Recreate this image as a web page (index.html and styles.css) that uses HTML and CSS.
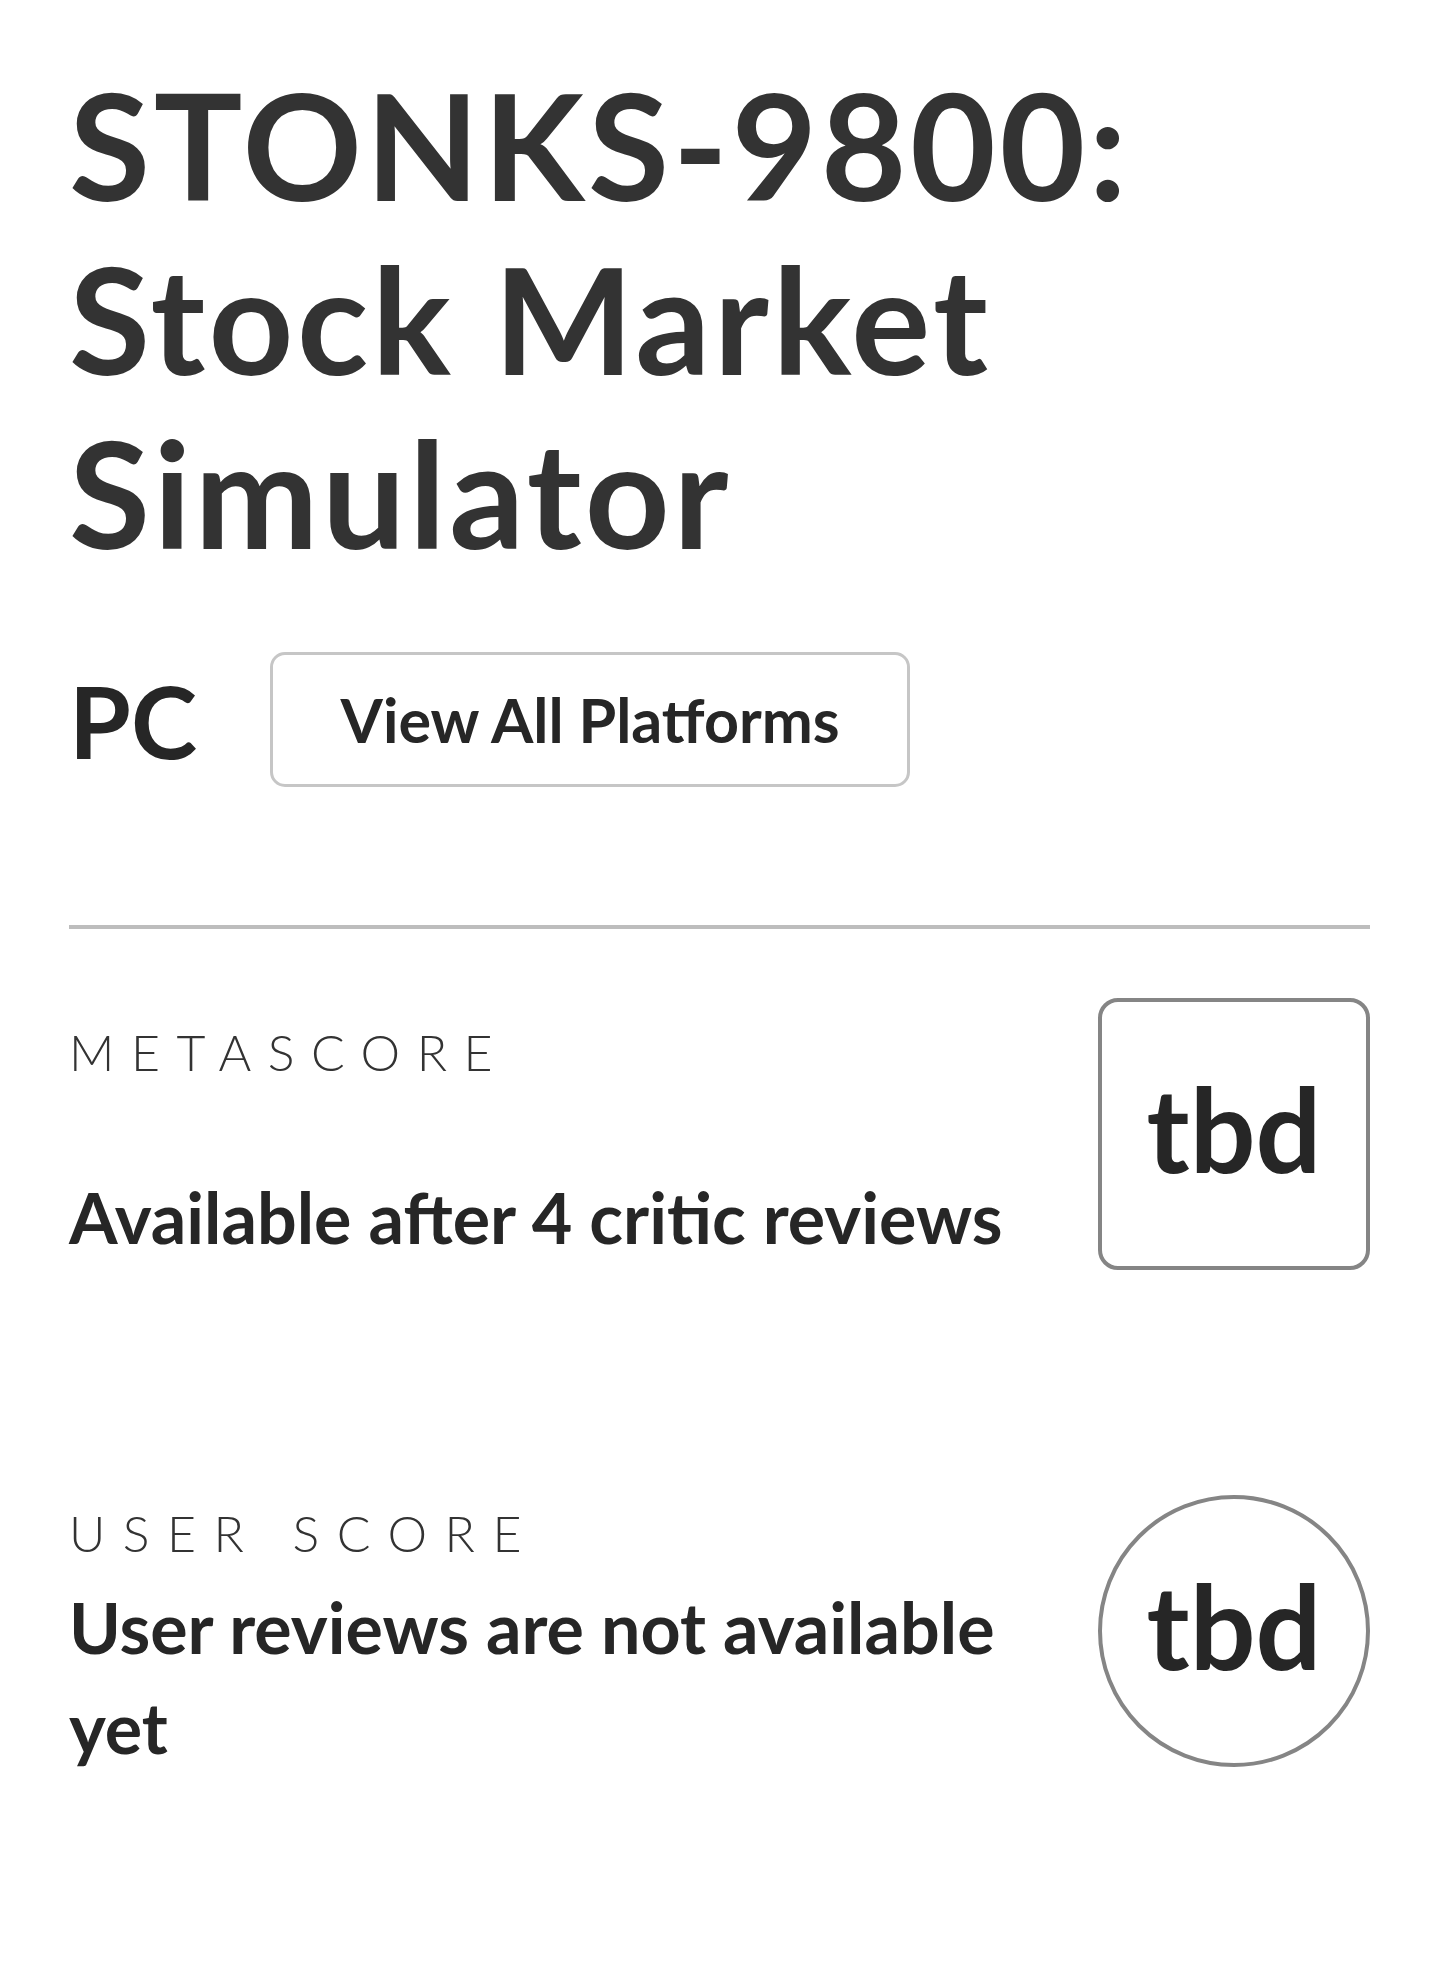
FILE: index.html
```html
<!DOCTYPE html>
<html lang="en">
<head>
    <meta charset="UTF-8">
    <meta name="viewport" content="width=device-width, initial-scale=1.0">
    <title>STONKS-9800: Stock Market Simulator</title>
    <link rel="stylesheet" href="styles.css">
</head>
<body>
    <article class="game">
        <h1 class="game-title">STONKS-9800: Stock Market Simulator</h1>

        <div class="platforms">
            <span class="platform">PC</span>
            <button type="button" class="platforms-btn">View All Platforms</button>
        </div>

        <hr class="divider">

        <!-- critic score -->
        <section class="score score-meta">
            <div class="score-info">
                <h2 class="score-label">Metascore</h2>
                <p class="score-note">Available after 4 critic reviews</p>
            </div>
            <div class="score-badge">tbd</div>
        </section>

        <!-- user score -->
        <section class="score score-user">
            <div class="score-info">
                <h2 class="score-label">User Score</h2>
                <p class="score-note">User reviews are not available yet</p>
            </div>
            <div class="score-badge round">tbd</div>
        </section>
    </article>
</body>
</html>
```
FILE: styles.css
```css
body {
    margin: 0;
    background-color: #fff;
    font-family: Lato, "Liberation Sans", sans-serif;
    color: #262626;
}

.game {
    padding: 57px 69px 0;
}

.game-title {
    margin: 0;
    font-size: 148px;
    line-height: 174px;
    font-weight: 700;
    letter-spacing: 3.5px;
    color: #333;
}

.platforms {
    display: flex;
    align-items: center;
    gap: 73px;
    margin-top: 73px;
}

.platform {
    font-size: 100px;
    font-weight: 700;
    line-height: 1;
}

.platforms-btn {
    box-sizing: border-box;
    width: 640px;
    height: 135px;
    padding: 0;
    border: 3px solid #c6c6c6;
    border-radius: 15px;
    background-color: #fff;
    font-family: inherit;
    font-size: 61px;
    font-weight: 700;
    color: #262626;
}

.divider {
    margin: 138px 0 0;
    border: 0;
    height: 4px;
    background-color: #bdbdbd;
}

.score {
    display: flex;
    align-items: flex-start;
    gap: 40px;
}

.score-meta {
    margin-top: 69px;
}

.score-user {
    margin-top: 225px;
}

.score-info {
    flex: 1;
}

.score-label {
    margin: 0;
    font-size: 50px;
    line-height: 60px;
    font-weight: 300;
    text-transform: uppercase;
    color: #333;
}

.score-note {
    margin: 0;
    font-size: 70px;
    font-weight: 700;
}

.score-meta .score-info {
    padding-top: 24px;
}

.score-meta .score-label {
    letter-spacing: 16.5px;
}

.score-meta .score-note {
    margin-top: 86px;
    line-height: 98px;
}

.score-user .score-info {
    padding-top: 8px;
}

.score-user .score-label {
    letter-spacing: 17.5px;
}

.score-user .score-note {
    margin-top: 14px;
    line-height: 100px;
}

.score-badge {
    box-sizing: border-box;
    display: flex;
    align-items: center;
    justify-content: center;
    flex: none;
    width: 272px;
    height: 272px;
    padding-bottom: 10px;
    border: 4px solid #858585;
    border-radius: 20px;
    font-size: 116px;
    font-weight: 700;
    line-height: 1;
    color: #262626;
}

.score-badge.round {
    border-radius: 50%;
}
```
